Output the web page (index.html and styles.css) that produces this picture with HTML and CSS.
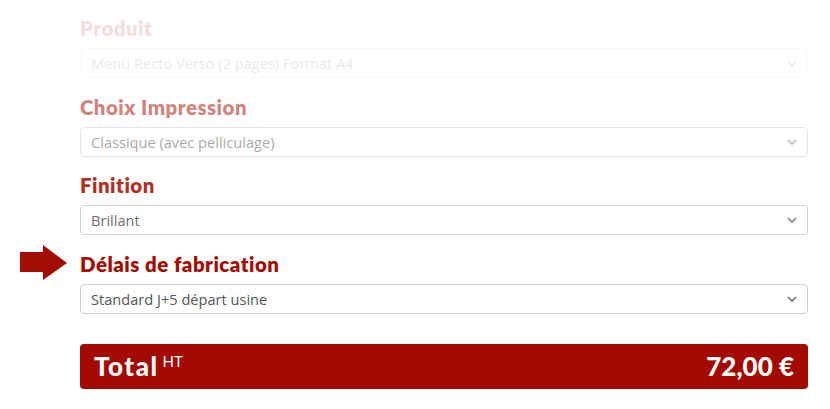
FILE: index.html
```html
<!DOCTYPE html>
<html lang="fr">
<head>
    <meta charset="UTF-8">
    <title>Devis</title>
    <link rel="stylesheet" href="styles.css">
</head>
<body>
    <div id="form">
        <div class="field step-1">
            <h3>Produit</h3>
            <div class="select">
                <span>Menu Recto Verso (2 pages) Format A4</span>
                <svg class="chevron" width="10" height="6" viewBox="0 0 10 6"><path d="M1 1l4 4 4-4" fill="none" stroke="currentColor" stroke-width="1.5"/></svg>
            </div>
        </div>
        <div class="field step-2">
            <h3>Choix Impression</h3>
            <div class="select">
                <span>Classique (avec pelliculage)</span>
                <svg class="chevron" width="10" height="6" viewBox="0 0 10 6"><path d="M1 1l4 4 4-4" fill="none" stroke="currentColor" stroke-width="1.5"/></svg>
            </div>
        </div>
        <div class="field step-3">
            <h3>Finition</h3>
            <div class="select">
                <span>Brillant</span>
                <svg class="chevron" width="10" height="6" viewBox="0 0 10 6"><path d="M1 1l4 4 4-4" fill="none" stroke="currentColor" stroke-width="1.5"/></svg>
            </div>
        </div>
        <div class="field current">
            <svg class="arrow" width="47" height="35" viewBox="0 0 47 35"><path d="M0 7h23V0l24 18-24 17v-8H0z" fill="#a30c00"/></svg>
            <h3>Délais de fabrication</h3>
            <div class="select">
                <span>Standard J+5 départ usine</span>
                <svg class="chevron" width="10" height="6" viewBox="0 0 10 6"><path d="M1 1l4 4 4-4" fill="none" stroke="currentColor" stroke-width="1.5"/></svg>
            </div>
        </div>
        <div id="total">
            <span class="label">Total<sup>HT</sup></span>
            <span class="price">72,00 €</span>
        </div>
    </div>
</body>
</html>
```
FILE: styles.css
```css
*{
    margin: 0;
    padding: 0;
    box-sizing: border-box;
}
body{
    background: #fff;
    font-family: "Lato", "Liberation Sans", sans-serif;
}
#form{
    width: 728px;
    margin-left: 80px;
    padding-top: 17px;
}
.field{
    position: relative;
    margin-bottom: 17.5px;
}
.field h3{
    font-size: 20.4px;
    font-weight: 800;
    letter-spacing: 0.5px;
    color: #a30c00;
    line-height: 23px;
    margin-bottom: 8px;
}
.select{
    height: 30px;
    border: 1px solid #ccc;
    border-radius: 4px;
    padding: 0 10px;
    display: flex;
    align-items: center;
    justify-content: space-between;
    font-family: "Open Sans", "Liberation Sans", sans-serif;
    font-size: 14.6px;
    color: #555;
    background: #fff;
}
.chevron{
    color: #666;
}
.step-1{
    opacity: 0.13;
}
.step-2{
    opacity: 0.5;
}
.step-3{
    opacity: 0.85;
}
.arrow{
    position: absolute;
    left: -60px;
    top: -8px;
}
#total{
    margin-top: 30px;
    height: 45px;
    background: #a30a00;
    border-radius: 4px;
    color: #fff;
    display: flex;
    align-items: center;
    justify-content: space-between;
    padding: 0 14px;
    font-weight: 900;
    font-size: 26px;
}
#total .label{
    letter-spacing: 1.5px;
}
#total sup{
    font-size: 15px;
    font-weight: 400;
    letter-spacing: 0;
    margin-left: 4px;
    vertical-align: 9px;
}
```
